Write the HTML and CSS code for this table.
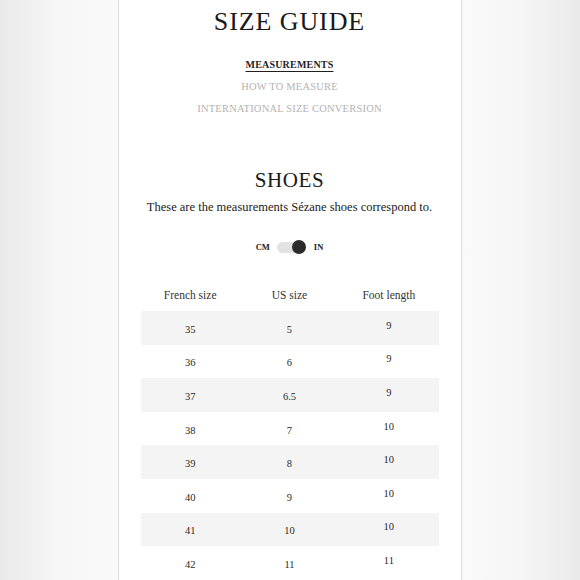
FILE: index.html
```html
<!DOCTYPE html>
<html lang="en">
<head>
<meta charset="utf-8">
<title>Size guide</title>
<link rel="stylesheet" href="styles.css">
</head>
<body>
<div class="panel">
  <h1 class="title">SIZE GUIDE</h1>
  <ul class="tabs">
    <li class="tab active">MEASUREMENTS</li>
    <li class="tab">HOW TO MEASURE</li>
    <li class="tab">INTERNATIONAL SIZE CONVERSION</li>
  </ul>
  <h2 class="section">SHOES</h2>
  <p class="intro">These are the measurements Sézane shoes correspond to.</p>
  <div class="units">
    <span class="unit">CM</span>
    <span class="switch"><span class="knob"></span></span>
    <span class="unit">IN</span>
  </div>
  <div class="table">
    <div class="row head"><span class="cell">French size</span><span class="cell">US size</span><span class="cell">Foot length</span></div>
    <div class="row shade"><span class="cell">35</span><span class="cell">5</span><span class="cell foot">9</span></div>
    <div class="row"><span class="cell">36</span><span class="cell">6</span><span class="cell foot">9</span></div>
    <div class="row shade"><span class="cell">37</span><span class="cell">6.5</span><span class="cell foot">9</span></div>
    <div class="row"><span class="cell">38</span><span class="cell">7</span><span class="cell foot">10</span></div>
    <div class="row shade"><span class="cell">39</span><span class="cell">8</span><span class="cell foot">10</span></div>
    <div class="row"><span class="cell">40</span><span class="cell">9</span><span class="cell foot">10</span></div>
    <div class="row shade"><span class="cell">41</span><span class="cell">10</span><span class="cell foot">10</span></div>
    <div class="row"><span class="cell">42</span><span class="cell">11</span><span class="cell foot">11</span></div>
  </div>
</div>
</body>
</html>
```

FILE: styles.css
```css
html, body {
  margin: 0;
  padding: 0;
  height: 580px;
  overflow: hidden;
}
body {
  background: linear-gradient(to right, #eaeaea 0, #f7f7f7 60px, #fafafa 118px, #fafafa 462px, #f6f6f6 520px, #eaeaea 100%);
  display: flex;
  justify-content: center;
  font-family: "Liberation Serif", "DejaVu Serif", serif;
  color: #222;
}
.panel {
  width: 342px;
  height: 580px;
  margin-left: -1px;
  background: #fff;
  border-left: 1px solid #dcdcdc;
  border-right: 1px solid #dcdcdc;
  display: flex;
  flex-direction: column;
  align-items: center;
}
.title {
  margin: 7px 0 0;
  font-size: 26px;
  line-height: 30px;
  font-weight: normal;
  letter-spacing: 0.9px;
  color: #1a1a1a;
}
.tabs {
  list-style: none;
  margin: 17px 0 0;
  padding: 0;
  display: flex;
  flex-direction: column;
  align-items: center;
}
.tab {
  font-size: 10.5px;
  line-height: 22px;
  letter-spacing: 0.2px;
  color: #b3b3b3;
}
.tab.active {
  color: #1f1f1f;
  font-weight: bold;
  font-size: 10px;
  text-decoration: underline;
  text-underline-offset: 3px;
  text-decoration-thickness: 1px;
}
.section {
  margin: 47px 0 0;
  font-size: 21px;
  line-height: 26px;
  font-weight: normal;
  letter-spacing: 0.6px;
  color: #1a1a1a;
}
.intro {
  margin: 4px 0 0;
  font-size: 12.5px;
  line-height: 20px;
  color: #222;
}
.units {
  margin-top: 22px;
  height: 16px;
  display: flex;
  align-items: center;
  gap: 7px;
}
.unit {
  font-size: 8.5px;
  font-weight: bold;
  color: #222;
}
.switch {
  width: 28px;
  height: 11px;
  border-radius: 6px;
  background: #e3e3e3;
  display: flex;
  align-items: center;
  justify-content: flex-end;
  margin-right: 2px;
}
.knob {
  width: 14px;
  height: 14px;
  border-radius: 50%;
  background: #2b2b2b;
  margin-right: -1px;
}
.table {
  margin-top: 24px;
  width: 298px;
  display: flex;
  flex-direction: column;
}
.row {
  height: 33.6px;
  display: grid;
  grid-template-columns: 1fr 1fr 1fr;
  align-items: center;
  text-align: center;
  font-size: 10.5px;
  color: #2a2a2a;
}
.row.head {
  height: 32px;
  font-size: 11.5px;
  color: #333;
}
.row.shade {
  background: #f4f4f4;
}
.cell {
  padding-top: 3px;
}
.cell.foot {
  padding-top: 0;
  padding-bottom: 5px;
}
.head .cell {
  padding: 0;
}
```
